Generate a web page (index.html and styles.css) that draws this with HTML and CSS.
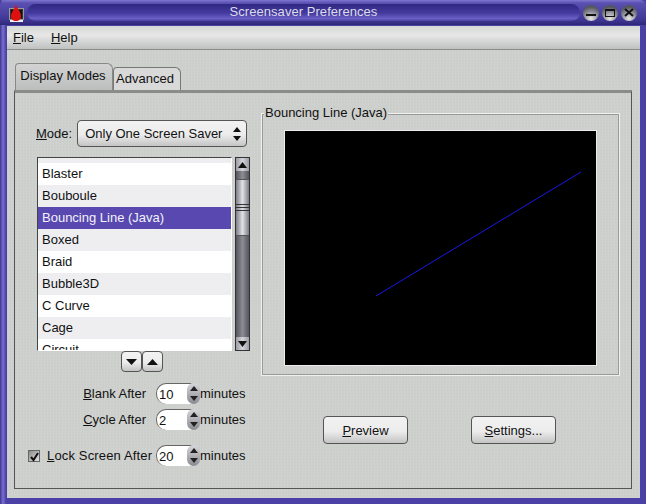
FILE: index.html
```html
<!DOCTYPE html>
<html lang="en">
<head>
<meta charset="UTF-8">
<title>Screensaver Preferences</title>
<link rel="stylesheet" href="styles.css">
</head>
<body>
<div class="window">
    <div class="titlebar">
        <svg class="appicon" width="18" height="18" viewBox="0 0 18 18">
            <rect x="2.5" y="4.5" width="14" height="11" fill="#333" stroke="#999"/>
            <rect x="4" y="6" width="11" height="8" fill="#111"/>
            <rect x="3" y="16" width="13" height="2" fill="#eee"/>
            <path d="M9 0C9 4 14 7 14 12C14 15 12 17 9 17C6 17 4 15 4 12C4 8 8 5 9 0Z" fill="#e01010"/>
        </svg>
        <div class="titlepill">Screensaver Preferences</div>
        <div class="wmbuttons">
            <span class="wmbtn"><svg width="16" height="16" viewBox="0 0 16 16"><rect x="3" y="9" width="10" height="2" fill="#111"/></svg></span>
            <span class="wmbtn"><svg width="16" height="16" viewBox="0 0 16 16"><rect x="3.5" y="4.5" width="9" height="7" fill="none" stroke="#111"/><rect x="3" y="4" width="10" height="2" fill="#111"/></svg></span>
            <span class="wmbtn"><svg width="16" height="16" viewBox="0 0 16 16"><path d="M4 4L12 11M12 4L4 11" stroke="#111" stroke-width="2"/></svg></span>
        </div>
    </div>
    <div class="client">
        <div class="menubar">
            <span class="menuitem"><u>F</u>ile</span>
            <span class="menuitem"><u>H</u>elp</span>
        </div>
        <div class="tabarea">
            <div class="tabs">
                <div class="tab active">Display Modes</div>
                <div class="tab">Advanced</div>
            </div>
            <div class="notebook">
                <div class="leftcol">
                    <div class="moderow">
                        <span><u>M</u>ode:</span>
                        <div class="combo">
                            <span>Only One Screen Saver</span>
                            <svg width="10" height="16" viewBox="0 0 10 16"><path d="M5 1L9 6H1ZM5 15L1 10H9Z" fill="#111"/></svg>
                        </div>
                    </div>
                    <div class="listrow">
                        <div class="list">
                            <div class="rowtop"></div>
                            <div class="row">Blaster</div>
                            <div class="row alt">Bouboule</div>
                            <div class="row selected">Bouncing Line (Java)</div>
                            <div class="row alt">Boxed</div>
                            <div class="row">Braid</div>
                            <div class="row alt">Bubble3D</div>
                            <div class="row">C Curve</div>
                            <div class="row alt">Cage</div>
                            <div class="row">Circuit</div>
                        </div>
                        <div class="scrollbar">
                            <div class="sbarrow"><svg width="9" height="6" viewBox="0 0 9 6"><path d="M4.5 0L9 6H0Z" fill="#111"/></svg></div>
                            <div class="thumb"><i></i><i></i><i></i></div>
                            <div class="sbtrack"></div>
                            <div class="sbarrow"><svg width="9" height="6" viewBox="0 0 9 6"><path d="M0 0H9L4.5 6Z" fill="#111"/></svg></div>
                        </div>
                    </div>
                    <div class="updown">
                        <div class="smallbtn"><svg width="11" height="6" viewBox="0 0 11 6"><path d="M0 0H11L5.5 6Z" fill="#111"/></svg></div>
                        <div class="smallbtn"><svg width="11" height="6" viewBox="0 0 11 6"><path d="M5.5 0L11 6H0Z" fill="#111"/></svg></div>
                    </div>
                    <div class="spinrow first">
                        <span class="spinlabel"><u>B</u>lank After</span>
                        <div class="spin"><span>10</span><div class="spinbtns"><b class="up"></b><b class="down"></b></div></div>
                        <span>minutes</span>
                    </div>
                    <div class="spinrow">
                        <span class="spinlabel"><u>C</u>ycle After</span>
                        <div class="spin"><span>2</span><div class="spinbtns"><b class="up"></b><b class="down"></b></div></div>
                        <span>minutes</span>
                    </div>
                    <div class="spinrow lock">
                        <div class="check"><svg width="11" height="11" viewBox="0 0 11 11"><path d="M2 6L4.5 9L9 2" fill="none" stroke="#111" stroke-width="2"/></svg></div>
                        <span class="locklabel"><u>L</u>ock Screen After</span>
                        <div class="spin"><span>20</span><div class="spinbtns"><b class="up"></b><b class="down"></b></div></div>
                        <span>minutes</span>
                    </div>
                </div>
                <div class="rightcol">
                    <div class="group">
                        <div class="grouplabel">Bouncing Line (Java)</div>
                        <div class="preview">
                            <svg width="307" height="230" viewBox="0 0 307 230"><line x1="89" y1="163" x2="294" y2="39" stroke="#1818e8"/></svg>
                        </div>
                    </div>
                    <div class="actions">
                        <div class="btn"><span><u>P</u>review</span></div>
                        <div class="btn"><span><u>S</u>ettings...</span></div>
                    </div>
                </div>
            </div>
        </div>
    </div>
</div>
</body>
</html>
```

FILE: styles.css
```css
html, body{
    margin: 0;
    padding: 0;
}
body{
    font-family: "Liberation Sans", Arial, sans-serif;
    font-size: 13px;
    color: #111;
}
.window{
    width: 646px;
    height: 504px;
    box-sizing: border-box;
    background: linear-gradient(90deg, #3e358f 0, #7a70d0 3px, #4a40a5 6px);
    display: flex;
    flex-direction: column;
    overflow: hidden;
}
.titlebar{
    height: 25px;
    flex: none;
    background: linear-gradient(#7f76cf 0, #5a50b2 3px, #3f3694 20px, #2e2777 25px);
    display: flex;
    align-items: center;
    padding: 0 7px;
    border-radius: 6px 6px 0 0;
}
.appicon{
    flex: none;
    margin-right: 2px;
}
.titlepill{
    width: 553px;
    height: 17px;
    line-height: 16px;
    text-align: center;
    color: #dcdce8;
    background: linear-gradient(#2f2880, #453ba0 55%, #6a60c4 85%, #4a40a5);
    border-radius: 9px;
    letter-spacing: 0.05px;
    flex: none;
}
.wmbuttons{
    display: flex;
    gap: 3px;
    margin-left: 3px;
}
.wmbtn{
    width: 16px;
    height: 16px;
    border-radius: 50%;
    background: radial-gradient(circle at 50% 85%, #e8e8e8, #8c8c98 45%, #55555f 75%);
    display: block;
}
.wmbtn svg{
    display: block;
}
.client{
    flex: 1;
    margin: 1px 6px 6px 7px;
    background: repeating-conic-gradient(#d0d2cf 0 25%, #cbcdca 0 50%) 0 0/3px 3px;
    display: flex;
    flex-direction: column;
    min-height: 0;
}
.menubar{
    height: 23px;
    flex: none;
    background: linear-gradient(#d6d8d6, #e6e7e6 40%, #bfc1c0);
    border-bottom: 1px solid #8a8c8a;
    display: flex;
    align-items: center;
    padding-left: 6px;
    gap: 17px;
    font-size: 13px;
}
.tabarea{
    flex: 1;
    padding: 13px 8px 9px 7px;
    display: flex;
    flex-direction: column;
    min-height: 0;
}
.tabs{
    display: flex;
    align-items: flex-end;
    height: 27px;
    flex: none;
    padding-left: 1px;
}
.tab{
    box-sizing: border-box;
    height: 23px;
    width: 68px;
    line-height: 22px;
    text-align: center;
    padding-right: 4px;
    background: #d8d9d8;
    border: 1px solid #777;
    border-bottom: 0;
    border-radius: 4px 6px 0 0;
}
.tab.active{
    width: 98px;
    height: 27px;
    line-height: 24px;
    padding-right: 2px;
    background: linear-gradient(#d2d3d2, #bcbebd);
    border-color: #888;
}
.notebook{
    flex: 1;
    box-sizing: border-box;
    border: 1px solid #555;
    border-top: 3px solid #8a8c8a;
    display: flex;
    min-height: 0;
}
.leftcol{
    width: 237px;
    flex: none;
    box-sizing: border-box;
    padding: 27px 0 0 14px;
}
.moderow{
    height: 27px;
    display: flex;
    align-items: center;
    padding-left: 7px;
    gap: 5px;
}
.combo, .btn, .smallbtn{
    box-sizing: border-box;
    border: 1px solid #555;
    border-radius: 4px;
    background: linear-gradient(#f2f2f2, #ececec 55%, #c4c4c4);
}
.combo{
    width: 170px;
    height: 27px;
    flex: none;
    display: flex;
    align-items: center;
    justify-content: space-between;
    padding: 0 4px 0 7px;
}
.listrow{
    display: flex;
    margin-top: 10px;
    height: 194px;
    padding-left: 8px;
}
.list{
    width: 195px;
    height: 194px;
    box-sizing: border-box;
    border: 1px solid #444;
    border-right-color: #fff;
    border-bottom-color: #fff;
    background: #fff;
    overflow: hidden;
}
.rowtop{
    height: 5px;
    background: #eeeef1;
}
.row{
    height: 22px;
    line-height: 21px;
    padding-left: 4px;
}
.row.alt{
    background: #eeeef1;
}
.row.selected{
    background: #5848b0;
    color: #f2f2f8;
}
.scrollbar{
    width: 15px;
    margin-left: 3px;
    box-sizing: border-box;
    border: 1px solid #333;
    background: linear-gradient(90deg, #55555f, #8c8c94 50%, #55555f);
    display: flex;
    flex-direction: column;
}
.sbarrow{
    height: 13px;
    flex: none;
    display: flex;
    align-items: center;
    justify-content: center;
    background: linear-gradient(90deg, #9c9ca4, #d4d4da 50%, #9c9ca4);
}
.thumb{
    height: 55px;
    margin-top: 8px;
    flex: none;
    background: linear-gradient(90deg, #7c7c86, #e0e0e6 50%, #7c7c86);
    border-top: 1px solid #555;
    border-bottom: 1px solid #555;
    display: flex;
    flex-direction: column;
    justify-content: center;
    gap: 2px;
}
.thumb i{
    display: block;
    height: 1px;
    background: #333;
}
.sbtrack{
    flex: 1;
}
.updown{
    display: flex;
    justify-content: flex-start;
    padding-left: 92px;
    height: 21px;
}
.smallbtn{
    width: 21px;
    height: 21px;
    display: flex;
    align-items: center;
    justify-content: center;
}
.spinrow{
    display: flex;
    align-items: center;
    height: 21px;
    margin-top: 5px;
}
.spinrow.first{
    margin-top: 11px;
}
.spinrow.lock{
    margin-top: 15px;
}
.spinlabel{
    width: 117px;
    text-align: right;
    margin-right: 10px;
    white-space: nowrap;
}
.check{
    width: 12px;
    height: 12px;
    box-sizing: border-box;
    border: 1px solid #666;
    background: linear-gradient(135deg, #8a8a8a, #e4e4e4);
    margin-left: -1px;
    margin-right: 7px;
    flex: none;
}
.check svg{
    display: block;
}
.locklabel{
    width: 109px;
    white-space: nowrap;
    letter-spacing: 0.15px;
}
.spin{
    width: 44px;
    height: 21px;
    flex: none;
    box-sizing: border-box;
    background: #fff;
    border-radius: 10px;
    border-top: 1px solid #666;
    border-left: 1px solid #666;
    display: flex;
    align-items: center;
    justify-content: space-between;
    padding-left: 2px;
}
.spinbtns{
    width: 13px;
    height: 21px;
    margin-top: -1px;
    border-radius: 7px;
    overflow: hidden;
    background: linear-gradient(#d8d8dc, #8a8a92);
    display: flex;
    flex-direction: column;
    align-items: center;
    justify-content: space-around;
}
.spinbtns b{
    display: block;
    width: 0;
    height: 0;
    border-left: 4px solid transparent;
    border-right: 4px solid transparent;
}
.spinbtns .up{
    border-bottom: 5px solid #222;
}
.spinbtns .down{
    border-top: 5px solid #222;
}
.rightcol{
    flex: 1;
    padding: 20px 12px 0 9px;
    display: flex;
    flex-direction: column;
}
.group{
    box-sizing: border-box;
    height: 263px;
    border: 1px solid #f0f0f0;
    outline: 1px solid #999;
    outline-offset: -2px;
    position: relative;
    padding: 17px 23px 0 23px;
}
.grouplabel{
    position: absolute;
    left: 2px;
    top: -9px;
    background: #cdcfcc;
    padding: 0 1px;
    line-height: 16px;
}
.preview{
    width: 311px;
    height: 234px;
    box-sizing: border-box;
    background: #000;
    border: 2px solid #000;
    outline: 1px solid #eee;
}
.preview svg{
    display: block;
    width: 100%;
    height: 100%;
}
.actions{
    display: flex;
    gap: 63px;
    padding: 40px 0 0 62px;
}
.btn{
    width: 85px;
    height: 28px;
    display: flex;
    align-items: center;
    justify-content: center;
}
```
